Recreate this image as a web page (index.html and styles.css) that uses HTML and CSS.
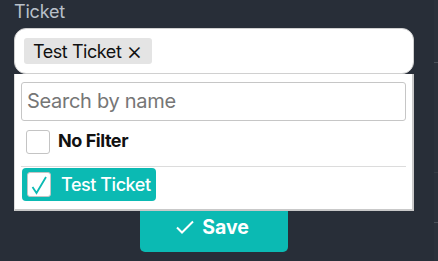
FILE: index.html
```html
<!DOCTYPE html>
<html>
<head>
<meta charset="utf-8">
<link rel="stylesheet" href="styles.css">
</head>
<body>
<div class="page">
  <div class="main">
    <div class="label">Ticket</div>
    <div class="field">
      <div class="control">
        <span class="chip">Test Ticket <span class="chip-x">×</span></span>
      </div>
      <div class="menu">
        <div class="search">Search by name</div>
        <div class="option first">
          <span class="box"></span>
          <span class="opt-text bold">No Filter</span>
        </div>
        <div class="sep"></div>
        <div class="option selected">
          <span class="box checked">
            <svg width="18" height="20" viewBox="0 0 18 20"><path d="M2.5 12 L6.5 18 L16 2" fill="none" stroke="#0bbab3" stroke-width="1.8"/></svg>
          </span>
          <span class="opt-text">Test Ticket</span>
        </div>
      </div>
    </div>
    <div class="actions">
      <button class="save">
        <svg width="20" height="16" viewBox="0 0 20 16"><path d="M2 8.5 L7 13.5 L18 2.5" fill="none" stroke="#fff" stroke-width="2"/></svg>
        <span>Save</span>
      </button>
    </div>
  </div>
  <div class="side">
    <div class="side-line l1"></div>
    <div class="side-line l2"></div>
    <div class="side-line l3"></div>
  </div>
</div>
</body>
</html>
```
FILE: styles.css
```css
html, body {
  margin: 0;
  padding: 0;
  background: #282e38;
  font-family: Inter, "Noto Sans", sans-serif;
}
.page {
  display: flex;
  width: 438px;
  height: 261px;
  overflow: hidden;
}
.main {
  width: 434px;
  padding-left: 14px;
  box-sizing: border-box;
}
.side {
  width: 4px;
  position: relative;
  background: #2b313b;
}
.side-line {
  position: absolute;
  left: 0;
  right: 0;
  height: 1px;
  background: #4a5059;
}
.l1 { top: 62px; }
.l2 { top: 172px; background: #363c45; }
.l3 { top: 222px; }
.label {
  color: #b9c0c9;
  font-size: 18px;
  line-height: 22px;
  height: 28px;
  padding-top: 1px;
  box-sizing: border-box;
  letter-spacing: -0.2px;
}
.field {
  position: relative;
  width: 400px;
}
.control {
  height: 46px;
  background: #fff;
  border-radius: 12px;
  border: 1px solid #d0d0d0;
  box-sizing: border-box;
  padding: 9px 0 0 9px;
}
.chip {
  display: inline-flex;
  align-items: center;
  height: 26px;
  padding: 0 10px 0 9px;
  background: #e4e4e4;
  border-radius: 3px;
  font-size: 18px;
  color: #111;
  letter-spacing: -0.45px;
}
.chip-x {
  margin-left: 5px;
  font-size: 25px;
  font-weight: 300;
  line-height: 26px;
}
.menu {
  position: absolute;
  top: 46px;
  left: 0;
  width: 400px;
  height: 137px;
  background: #fff;
  box-sizing: border-box;
  border-right: 2px solid #c9c9c9;
  border-bottom: 2px solid #c9c9c9;
  border-left: 1px solid #ddd;
  padding: 8px 6px 0 6px;
  z-index: 2;
}
.search {
  height: 39px;
  border: 1px solid #c6c6c6;
  border-radius: 3px;
  box-sizing: border-box;
  padding: 0 0 0 5px;
  line-height: 36px;
  font-size: 20px;
  color: #767676;
  letter-spacing: -0.3px;
}
.option {
  display: flex;
  align-items: center;
  height: 28px;
  margin-top: 8px;
  padding-left: 5px;
}
.option.first {
  margin-top: 7px;
  height: 28px;
}
.option .box {
  width: 24px;
  height: 24px;
  border: 1px solid #c4c4c4;
  border-radius: 3px;
  background: #fff;
  box-sizing: border-box;
  display: flex;
  align-items: center;
  justify-content: center;
}
.opt-text {
  margin-left: 8px;
  font-size: 18px;
  color: #111;
  letter-spacing: -0.45px;
}
.option.first .opt-text {
  margin-bottom: 4px;
}
.bold { font-weight: 700; }
.sep {
  height: 1px;
  background: #dcdcdc;
  margin-top: 10px;
}
.option.selected {
  margin-top: 1px;
  margin-left: 1px;
  width: 134px;
  height: 33px;
  background: #0bbab3;
  border-radius: 4px;
  box-sizing: border-box;
  padding-left: 5px;
}
.option.selected .opt-text {
  color: #fff;
  margin-left: 10px;
  font-weight: 500;
}
.box.checked {
  width: 24px;
  height: 25px;
}
.actions {
  padding-left: 126px;
  margin-top: 126px;
}
.save {
  width: 148px;
  height: 52px;
  background: #0bbab3;
  border: none;
  border-radius: 5px;
  color: #fff;
  font-family: Inter, "Noto Sans", sans-serif;
  font-size: 19.5px;
  font-weight: 700;
  display: flex;
  align-items: center;
  justify-content: center;
  gap: 7px;
  padding: 2px 4px 0 0;
  box-sizing: border-box;
}
```
